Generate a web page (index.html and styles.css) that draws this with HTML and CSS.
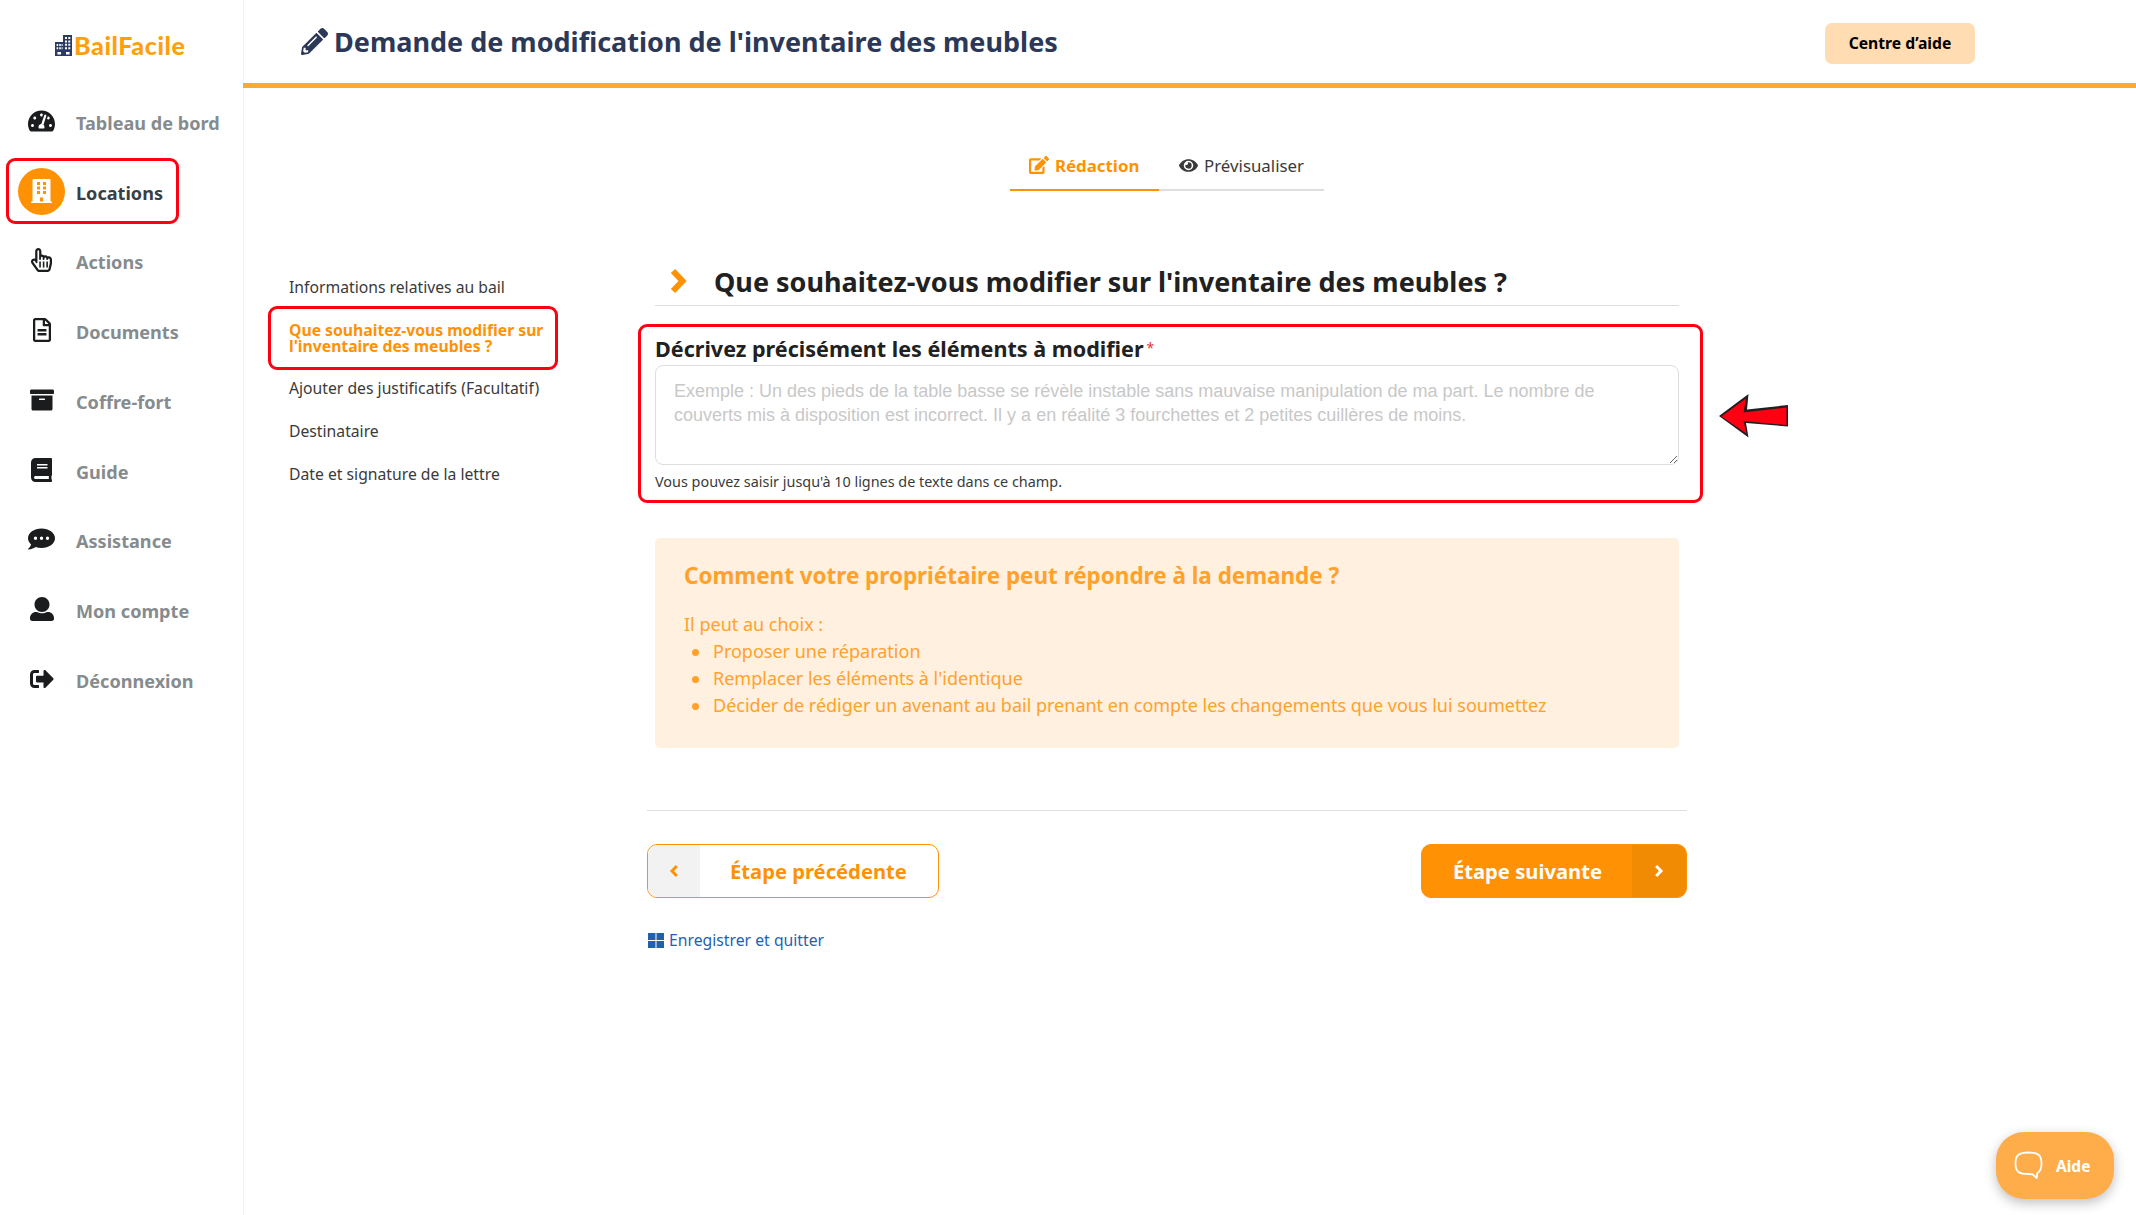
FILE: index.html
```html
<!DOCTYPE html>
<html lang="fr">
  <head>
    <meta charset="utf-8">
    <title>BailFacile - Demande de modification de l'inventaire des meubles</title>
    <link rel="stylesheet" href="styles.css">
  </head>
  <body>

    <div class="app">
      <aside class="sidebar">
        <a class="logo" href="#">
          <svg width="17" height="21" viewBox="0 0 17 21">
            <path fill="#2b3a66" d="M8 0h9v21H0V7h8z"/>
            <path fill="#fff" d="M10 2h2v2h-2zM13.3 2h2v2h-2zM10 5.4h2v2h-2zM13.3 5.4h2v2h-2zM10 8.8h2v2h-2zM13.3 8.8h2v2h-2zM10 12.2h2v2h-2zM13.3 12.2h2v2h-2zM1.6 9h1.6v2H1.6zM4.2 9h1.6v2H4.2zM6.6 9h1v2h-1zM1.6 12.3h1.6v2H1.6zM4.2 12.3h1.6v2H4.2zM6.6 12.3h1v2h-1zM2.4 17h3.6v2.6H2.4zM11 17h3.6v2.6H11z"/>
          </svg>
          <span>BailFacile</span>
        </a>
        <nav class="menu">
          <a class="menu-item" href="#">
            <span class="menu-icon"><svg width="27" height="24" viewBox="0 0 576 512"><path d="M288 32C128.94 32 0 160.94 0 320c0 52.8 14.25 102.26 39.06 144.8 5.61 9.62 16.3 15.2 27.44 15.2h443c11.14 0 21.83-5.58 27.44-15.2C561.75 422.26 576 372.8 576 320c0-159.06-128.94-288-288-288zm0 64c14.71 0 26.58 10.13 30.32 23.65-1.11 2.26-2.64 4.23-3.45 6.67l-9.22 27.67c-5.13 3.49-10.97 6.01-17.64 6.01-17.67 0-32-14.33-32-32S270.33 96 288 96zM96 384c-17.67 0-32-14.33-32-32s14.33-32 32-32 32 14.33 32 32-14.33 32-32 32zm48-160c-17.67 0-32-14.33-32-32s14.33-32 32-32 32 14.33 32 32-14.33 32-32 32zm246.77-72.41l-61.33 184C343.13 347.33 352 364.54 352 384c0 11.72-3.38 22.55-8.88 32H232.88c-5.5-9.45-8.88-20.28-8.88-32 0-33.94 26.5-61.43 59.9-63.59l61.34-184.01c4.17-12.56 17.73-19.45 30.36-15.17 12.57 4.19 19.35 17.79 15.17 30.36zm14.66 57.2l15.52-46.55c3.47-1.29 7.13-2.23 11.05-2.23 17.67 0 32 14.33 32 32s-14.33 32-32 32c-11.38-.01-20.89-6.28-26.57-15.22zM480 384c-17.67 0-32-14.33-32-32s14.33-32 32-32 32 14.33 32 32-14.33 32-32 32z"/></svg></span>
            <span class="menu-label">Tableau de bord</span>
          </a>
          <a class="menu-item active" href="#">
            <span class="menu-icon"><svg width="21" height="24" viewBox="0 0 448 512"><path fill-rule="evenodd" d="M436 480h-20V24c0-13.3-10.7-24-24-24H56C42.7 0 32 10.7 32 24v456H12c-6.6 0-12 5.4-12 12v20h448v-20c0-6.600-5.400-12-12-12zM128 64h64v64h-64zM256 64h64v64h-64zM128 160h64v64h-64zM256 160h64v64h-64zM128 256h64v64h-64zM256 256h64v64h-64zM192 396h64v84h-64z"/></svg></span>
            <span class="menu-label">Locations</span>
          </a>
          <a class="menu-item" href="#">
            <span class="menu-icon"><svg width="21" height="24" viewBox="0 0 448 512"><path d="M358.182 179.361c-19.493-24.768-52.679-31.945-79.872-19.098-15.127-15.687-36.182-22.487-56.595-19.629V67c0-36.944-29.736-67-66.286-67S89.143 30.056 89.143 67v161.129c-19.909-7.41-43.272-5.094-62.083 8.872-29.355 21.795-35.793 63.333-14.55 93.152l109.699 154.001C134.632 501.59 154.741 512 176 512h178.286c30.802 0 57.574-21.5 64.557-51.797l27.429-118.999A67.873 67.873 0 0 0 448 326v-84c0-46.844-46.625-79.273-89.818-62.639zM80.985 279.697l27.126 38.079c8.995 12.626 29.031 6.287 29.031-9.283V67c0-25.12 36.571-25.16 36.571 0v175c0 8.836 7.163 16 16 16h6.857c8.837 0 16-7.164 16-16v-35c0-25.12 36.571-25.16 36.571 0v35c0 8.836 7.163 16 16 16H272c8.837 0 16-7.164 16-16v-21c0-25.12 36.571-25.16 36.571 0v21c0 8.836 7.163 16 16 16h6.857c8.837 0 16-7.164 16-16 0-25.121 36.571-25.16 36.571 0v84c0 1.488-.169 2.977-.502 4.423l-27.43 119.001c-1.978 8.582-9.29 14.576-17.782 14.576H176c-5.769 0-11.263-2.878-14.697-7.697l-109.712-154c-14.406-20.223 14.994-42.818 29.394-22.606zM176 288h34v128h-34zM251.500 288h34v128h-34zM327 288h34v128h-34z"/></svg></span>
            <span class="menu-label">Actions</span>
          </a>
          <a class="menu-item" href="#">
            <span class="menu-icon"><svg width="18" height="24" viewBox="0 0 384 512"><path d="M288 248v28c0 6.6-5.4 12-12 12H108c-6.6 0-12-5.4-12-12v-28c0-6.6 5.4-12 12-12h168c6.6 0 12 5.4 12 12zm-12 72H108c-6.6 0-12 5.4-12 12v28c0 6.6 5.4 12 12 12h168c6.6 0 12-5.4 12-12v-28c0-6.6-5.4-12-12-12zm108-188.1V464c0 26.5-21.5 48-48 48H48c-26.5 0-48-21.5-48-48V48C0 21.5 21.5 0 48 0h204.1C264.8 0 277 5.1 286 14.1L369.9 98c9 8.9 14.1 21.2 14.1 33.9zm-128-80V128h76.1L256 51.9zM336 464V176H232c-13.3 0-24-10.7-24-24V48H48v416h288z"/></svg></span>
            <span class="menu-label">Documents</span>
          </a>
          <a class="menu-item" href="#">
            <span class="menu-icon"><svg width="24" height="24" viewBox="0 0 512 512"><path d="M32 448c0 17.7 14.3 32 32 32h384c17.7 0 32-14.3 32-32V160H32v288zm160-212c0-6.6 5.4-12 12-12h104c6.6 0 12 5.4 12 12v8c0 6.6-5.4 12-12 12H204c-6.6 0-12-5.4-12-12v-8zM480 32H32C14.3 32 0 46.3 0 64v48c0 8.8 7.2 16 16 16h480c8.8 0 16-7.2 16-16V64c0-17.7-14.3-32-32-32z"/></svg></span>
            <span class="menu-label">Coffre-fort</span>
          </a>
          <a class="menu-item" href="#">
            <span class="menu-icon"><svg width="21" height="24" viewBox="0 0 448 512"><path d="M448 360V24c0-13.3-10.7-24-24-24H96C43 0 0 43 0 96v320c0 53 43 96 96 96h328c13.3 0 24-10.7 24-24v-16c0-7.5-3.5-14.3-8.9-18.7-4.200-15.400-4.200-59.300 0-74.700 5.400-4.300 8.900-11.100 8.900-18.600zM128 134c0-3.300 2.700-6 6-6h212c3.300 0 6 2.700 6 6v20c0 3.300-2.700 6-6 6H134c-3.300 0-6-2.700-6-6v-20zm0 64c0-3.300 2.700-6 6-6h212c3.300 0 6 2.700 6 6v20c0 3.300-2.700 6-6 6H134c-3.300 0-6-2.700-6-6v-20zm253.400 250H96c-17.700 0-32-14.300-32-32 0-17.600 14.400-32 32-32h285.400c-1.900 17.100-1.900 46.900 0 64z"/></svg></span>
            <span class="menu-label">Guide</span>
          </a>
          <a class="menu-item" href="#">
            <span class="menu-icon"><svg width="27" height="24" viewBox="-32 0 576 512"><path fill-rule="evenodd" d="M256 32C97 32-32 125.100-32 240c0 49.600 25 95 65 130.700C20 421.100-25 466-29.800 466.500c-2.200 2.300-2.800 5.700-1.500 8.700S-27.200 480-24 480c70 0 128-31.800 156-51.400 37 12.300 80 19.400 124 19.400 159 0 288-93.100 288-208S415 32 256 32zM128 204a36 36 0 1 0 0 72 36 36 0 0 0 0-72zM256 204a36 36 0 1 0 0 72 36 36 0 0 0 0-72zM384 204a36 36 0 1 0 0 72 36 36 0 0 0 0-72z"/></svg></span>
            <span class="menu-label">Assistance</span>
          </a>
          <a class="menu-item" href="#">
            <span class="menu-icon"><svg width="24" height="24" viewBox="0 0 512 512"><path d="M256 320c88.400 0 160-71.600 160-160S344.400 0 256 0 96 71.600 96 160s71.600 160 160 160zm128 0h-20c-64 38-152 38-216 0h-20C57.300 320 0 377.300 0 448v16c0 26.500 21.500 48 48 48h416c26.500 0 48-21.500 48-48v-16c0-70.700-57.300-128-128-128z"/></svg></span>
            <span class="menu-label">Mon compte</span>
          </a>
          <a class="menu-item" href="#">
            <span class="menu-icon"><svg width="24" height="24" viewBox="0 0 512 512"><path d="M497 273L329 441c-15 15-41 4.500-41-17v-96H152c-13.300 0-24-10.700-24-24v-96c0-13.300 10.700-24 24-24h136V88c0-21.400 25.900-32 41-17l168 168c9.300 9.400 9.300 24.600 0 34zM192 436v-40c0-6.600-5.400-12-12-12H96c-17.700 0-32-14.300-32-32V160c0-17.700 14.300-32 32-32h84c6.600 0 12-5.400 12-12V76c0-6.600-5.400-12-12-12H96c-53 0-96 43-96 96v192c0 53 43 96 96 96h84c6.600 0 12-5.400 12-12z"/></svg></span>
            <span class="menu-label">Déconnexion</span>
          </a>
        </nav>
      </aside>

      <div class="page">
        <header class="header">
          <h1>
            <svg width="27" height="27" viewBox="0 0 512 512"><path d="M497.900 142.100l-46.100 46.100c-4.700 4.700-12.300 4.700-17 0l-111-111c-4.700-4.700-4.700-12.300 0-17l46.100-46.100c18.700-18.700 49.100-18.700 67.900 0l60.100 60.100c18.800 18.700 18.800 49.100 0 67.900zM284.200 99.800L21.600 362.400.4 483.900c-2.900 16.400 11.400 30.600 27.800 27.800l121.500-21.300 262.600-262.600c4.700-4.700 4.700-12.300 0-17l-111-111c-4.800-4.700-12.400-4.700-17.100 0zM124.100 339.900c-5.500-5.500-5.500-14.300 0-19.800l154-154c5.500-5.500 14.300-5.500 19.800 0s5.500 14.300 0 19.800l-154 154c-5.500 5.500-14.300 5.500-19.800 0zM88 424h48v36.300l-64.500 11.300-31.100-31.100L51.700 376H88v48z"/></svg>
            Demande de modification de l'inventaire des meubles
          </h1>
          <a class="help-center" href="#">Centre d’aide</a>
        </header>

        <div class="tabs">
          <a class="tab active" href="#">
            <svg width="20" height="18" viewBox="0 0 576 512"><path d="M402.600 83.200l90.200 90.200c3.800 3.800 3.800 10 0 13.800L274.400 405.600l-92.800 10.300c-12.400 1.400-22.900-9.100-21.500-21.500l10.300-92.800L388.800 83.200c3.800-3.800 10-3.800 13.800 0zm162-22.900l-48.800-48.800c-15.200-15.200-39.900-15.200-55.200 0l-35.400 35.400c-3.800 3.800-3.800 10 0 13.800l90.200 90.200c3.800 3.800 10 3.800 13.800 0l35.400-35.400c15.200-15.300 15.200-40 0-55.200zM384 346.200V448H64V128h229.800c3.200 0 6.200-1.300 8.500-3.500l40-40c7.600-7.600 2.200-20.500-8.500-20.500H48C21.500 64 0 85.500 0 112v352c0 26.500 21.500 48 48 48h352c26.500 0 48-21.500 48-48V306.200c0-10.700-12.900-16-20.500-8.500l-40 40c-2.200 2.300-3.500 5.300-3.500 8.500z"/></svg>
            Rédaction
          </a>
          <a class="tab" href="#">
            <svg width="19" height="17" viewBox="0 0 576 512"><path d="M572.520 241.400C518.290 135.590 410.930 64 288 64S57.680 135.640 3.480 241.410a32.350 32.350 0 0 0 0 29.190C57.710 376.410 165.070 448 288 448s230.320-71.640 284.520-177.410a32.350 32.350 0 0 0 0-29.190zM288 400a144 144 0 1 1 144-144 143.930 143.930 0 0 1-144 144zm0-240a95.310 95.310 0 0 0-25.310 3.790 47.850 47.850 0 0 1-66.900 66.900A95.780 95.780 0 1 0 288 160z"/></svg>
            Prévisualiser
          </a>
        </div>

        <div class="content">
          <ul class="steps">
            <li>Informations relatives au bail</li>
            <li class="current">Que souhaitez-vous modifier sur l'inventaire des meubles ?</li>
            <li>Ajouter des justificatifs (Facultatif)</li>
            <li>Destinataire</li>
            <li>Date et signature de la lettre</li>
          </ul>

          <main class="form">
            <section class="question">
              <h2>
                <svg width="17" height="26" viewBox="0 0 17 26"><path d="M3 3l9.500 10L3 23" fill="none" stroke="#ff9204" stroke-width="6"/></svg>
                Que souhaitez-vous modifier sur l'inventaire des meubles ?
              </h2>
              <div class="field">
                <label for="description">Décrivez précisément les éléments à modifier<sup>*</sup></label>
                <textarea id="description" placeholder="Exemple : Un des pieds de la table basse se révèle instable sans mauvaise manipulation de ma part. Le nombre de couverts mis à disposition est incorrect. Il y a en réalité 3 fourchettes et 2 petites cuillères de moins."></textarea>
                <small>Vous pouvez saisir jusqu'à 10 lignes de texte dans ce champ.</small>
                <svg class="arrow" width="70" height="44" viewBox="0 0 70 44"><path fill="#231f20" d="M0 22L29.500 0 28 15.500 69 11v21.500L27 29l2.500 14.500z"/><path fill="#ff0012" d="M2.500 22.500L27 4.500 24.500 18.500 67.500 13.500v17.500L24.500 27l3 12.500z"/></svg>
              </div>
              <div class="info">
                <h3>Comment votre propriétaire peut répondre à la demande ?</h3>
                <p>Il peut au choix :</p>
                <ul>
                  <li>Proposer une réparation</li>
                  <li>Remplacer les éléments à l'identique</li>
                  <li>Décider de rédiger un avenant au bail prenant en compte les changements que vous lui soumettez</li>
                </ul>
              </div>
            </section>

            <div class="actions">
              <button class="btn btn-prev" type="button">
                <span class="btn-icon"><svg width="10" height="14" viewBox="0 0 10 14"><path d="M7.800 2L3 7l4.800 5" fill="none" stroke="currentColor" stroke-width="3"/></svg></span>
                <span class="btn-text">Étape précédente</span>
              </button>
              <button class="btn btn-next" type="button">
                <span class="btn-text">Étape suivante</span>
                <span class="btn-icon"><svg width="10" height="14" viewBox="0 0 10 14"><path d="M2.200 2L7 7l-4.800 5" fill="none" stroke="currentColor" stroke-width="3"/></svg></span>
              </button>
            </div>

            <a class="save" href="#">
              <svg width="16" height="15" viewBox="0 0 16 15"><path d="M0 0h7.500v7H0zM8.500 0H16v7H8.500zM0 8h7.500v7H0zM8.500 8H16v7H8.500z"/></svg>
              Enregistrer et quitter
            </a>
          </main>
        </div>
      </div>

      <button class="chat" type="button">
        <svg width="29" height="29" viewBox="0 0 29 29"><path d="M14.500 1.500C5 1.500 1.500 4 1.500 12.500S5 23 14.500 23c1.500 0 3 0 4 .3l4.300 3.700.5-5c3.200-1.500 4.200-4.500 4.200-9.500C27.500 4 24 1.500 14.500 1.500z" fill="none" stroke="#fff" stroke-width="1.800" stroke-linejoin="round"/></svg>
        Aide
      </button>
    </div>

  </body>
</html>
```
FILE: styles.css
```css
*, *::before, *::after {
  box-sizing: border-box;
}

body {
  margin: 0;
  background: #fff;
  color: #212529;
  font-family: "Noto Sans", sans-serif;
  font-size: 18px;
}

a {
  color: inherit;
  text-decoration: none;
}

svg {
  flex: none;
  fill: currentColor;
}

h1, h2, h3, p, ul {
  margin: 0;
  padding: 0;
}

button {
  font-family: inherit;
  border: 0;
}

.app {
  display: flex;
  height: 1215px;
  overflow: hidden;
}

/* sidebar */

.sidebar {
  flex: none;
  width: 244px;
  border-right: 1px solid #f3f3f3;
}

.logo {
  display: flex;
  align-items: center;
  gap: 2px;
  height: 86px;
  padding: 4px 0 0 55px;
  color: #ff9f0d;
  font: 900 25px/1 Lato, sans-serif;
  letter-spacing: .6px;
}

.menu-item {
  display: flex;
  align-items: center;
  position: relative;
  height: 69.75px;
  padding-left: 18px;
  color: #868b8e;
  font-size: 18.1px;
  font-weight: bold;
}

.menu-icon {
  display: flex;
  align-items: center;
  justify-content: center;
  width: 47px;
  height: 47px;
  margin-right: 11px;
  border-radius: 50%;
  color: #1b1c1e;
}

.menu-label {
  padding-top: 4px;
}

.menu-item.active {
  color: #3a3f44;
}

.active .menu-icon {
  margin-top: 1px;
  background: #ff9204;
  color: #fff;
}

/* red frames around the elements to look at */
.menu-item.active::after,
.steps .current::after,
.field::after {
  content: "";
  position: absolute;
  border: 3px solid #ff0012;
  border-radius: 9px;
  pointer-events: none;
}

.menu-item.active::after {
  top: 2px;
  left: 6px;
  width: 173px;
  height: 66px;
}

/* header */

.page {
  flex: 1;
  margin-left: -1px;
}

.header {
  display: flex;
  align-items: center;
  justify-content: space-between;
  height: 88px;
  padding: 0 161px 0 58px;
  border-bottom: 5px solid #ffa834;
}

.header h1 {
  display: flex;
  align-items: center;
  gap: 6px;
  padding-bottom: 1px;
  color: #2c3857;
  font-size: 27px;
  line-height: 1;
}

.help-center {
  width: 150px;
  height: 41px;
  margin-top: 3px;
  border-radius: 7px;
  background: #ffdcb2;
  color: #000;
  font-size: 15.7px;
  font-weight: bold;
  line-height: 41px;
  text-align: center;
}

/* tabs */

.tabs {
  display: flex;
  width: 314px;
  margin: 53px 0 0 767px;
  font-size: 16.85px;
}

.tab {
  display: flex;
  flex: 1;
  align-items: center;
  gap: 6px;
  height: 50px;
  padding-left: 20px;
  border-bottom: 2px solid #dedede;
  color: #3a3a3a;
}

.tab.active {
  flex: none;
  width: 149px;
  padding-left: 19px;
  border-color: #ff9204;
  color: #ff9204;
  font-weight: bold;
}

/* form */

.content {
  display: flex;
  padding: 72px 0 0 46px;
}

.steps {
  flex: none;
  width: 358px;
  padding: 17px 90px 0 0;
  list-style: none;
  font-size: 15.72px;
  line-height: 15.7px;
  color: #3a3a3a;
}

.steps li {
  position: relative;
  margin-bottom: 27.1px;
}

.steps .current {
  color: #ff9204;
  font-weight: bold;
}

.steps .current::after {
  top: -17px;
  left: -21px;
  width: 290px;
  height: 64px;
}

.form {
  width: 1040px;
}

.question {
  padding: 0 8px 62px;
  border-bottom: 1px solid #dfdfdf;
}

.question h2 {
  display: flex;
  align-items: center;
  gap: 27px;
  height: 43px;
  padding: 0 0 6px 15px;
  border-bottom: 1px solid #dfdfdf;
  color: #212121;
  font-size: 27px;
  line-height: 1;
}

.field {
  position: relative;
  display: flex;
  flex-direction: column;
  margin-top: 28px;
}

.field::after {
  top: -10px;
  left: -17px;
  width: 1065px;
  height: 179px;
}

.field label {
  height: 31px;
  color: #212121;
  font-size: 21.55px;
  font-weight: bold;
  line-height: 29px;
}

.field sup {
  margin-left: 3px;
  color: #e8353f;
  font-size: 14px;
  font-weight: normal;
  line-height: 0;
  vertical-align: 4px;
}

.field textarea {
  width: 100%;
  height: 100px;
  padding: 13px 18px;
  border: 1px solid #dedede;
  border-radius: 8px;
  font: 18px/24px "Liberation Sans", sans-serif;
}

.field textarea::placeholder {
  color: #c8c8c8;
}

.field small {
  margin-top: 7px;
  font-size: 14.4px;
  line-height: 20px;
  color: #3a3a3a;
}

.arrow {
  position: absolute;
  top: 60px;
  left: 1064px;
}

.info {
  height: 210px;
  margin-top: 46px;
  padding: 23px 29px;
  border-radius: 5px;
  background: #fff0e0;
  color: #ffa12b;
  line-height: 27px;
}

.info h3 {
  margin-bottom: 20px;
  font-size: 22.45px;
  line-height: 30px;
}

.info ul {
  padding-left: 29px;
  list-style: none;
}

.info li::before {
  content: "";
  display: inline-block;
  width: 7px;
  height: 7px;
  margin: 0 14px 2px -21px;
  border-radius: 50%;
  background: #ffa12b;
}

.actions {
  display: flex;
  justify-content: space-between;
  margin-top: 33px;
}

.btn {
  display: flex;
  height: 54px;
  padding: 0;
  overflow: hidden;
  border: 1px solid #ff9204;
  border-radius: 10px;
  font-size: 20.2px;
  font-weight: bold;
}

.btn-icon {
  display: flex;
  align-items: center;
  justify-content: center;
  width: 54px;
  height: 52px;
}

.btn-text {
  padding: 0 31px 0 30px;
  line-height: 52px;
}

.btn-prev {
  background: #fff;
  color: #ff9204;
}

.btn-prev .btn-icon {
  width: 52px;
  background: #f2f2f2;
}

.btn-next {
  background: #ff9204;
  color: #fff;
}

.btn-next .btn-text {
  padding: 0 30px 0 31px;
}

.btn-next .btn-icon {
  background: #f28b04;
}

.save {
  display: flex;
  align-items: center;
  gap: 5px;
  margin-top: 32px;
  padding-left: 1px;
  color: #1e62ae;
  font-size: 15.75px;
  line-height: 21px;
}

/* chat button */

.chat {
  position: absolute;
  right: 22px;
  bottom: 16px;
  display: flex;
  align-items: center;
  gap: 13px;
  width: 118px;
  height: 67px;
  padding: 0 0 0 18px;
  border-radius: 28px;
  background: #ffac4b;
  box-shadow: 0 4px 12px rgba(0, 0, 0, .25);
  color: #fff;
  font-size: 15.5px;
  font-weight: bold;
}
```
